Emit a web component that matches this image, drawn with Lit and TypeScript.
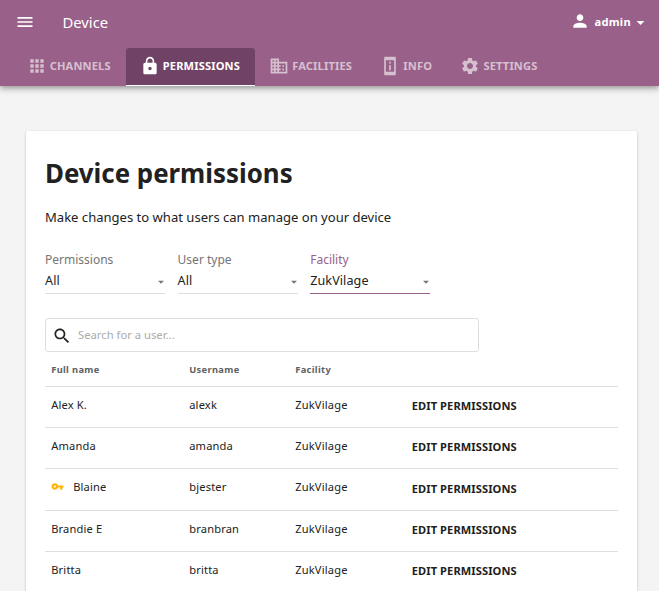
import { LitElement, html, css, nothing } from "lit";
import { customElement, property } from "lit/decorators.js";
import { classMap } from "lit/directives/class-map.js";

const ICONS: Record<string, string> = {
  menu: "M3 18h18v-2H3v2zm0-5h18v-2H3v2zm0-7v2h18V6H3z",
  apps: "M4 8h4V4H4v4zm6 12h4v-4h-4v4zm-6 0h4v-4H4v4zm0-6h4v-4H4v4zm6 0h4v-4h-4v4zm6-10v4h4V4h-4zm-6 4h4V4h-4v4zm6 6h4v-4h-4v4zm0 6h4v-4h-4v4z",
  lock: "M18 8h-1V6c0-2.76-2.24-5-5-5S7 3.24 7 6v2H6c-1.1 0-2 .9-2 2v10c0 1.1.9 2 2 2h12c1.1 0 2-.9 2-2V10c0-1.100-.9-2-2-2zm-6 9c-1.100 0-2-.9-2-2s.9-2 2-2 2 .9 2 2-.9 2-2 2zm3.100-9H8.900V6c0-1.710 1.390-3.100 3.100-3.100 1.710 0 3.100 1.390 3.100 3.100v2z",
  business: "M12 7V3H2v18h20V7H12zM6 19H4v-2h2v2zm0-4H4v-2h2v2zm0-4H4V9h2v2zm0-4H4V5h2v2zm4 12H8v-2h2v2zm0-4H8v-2h2v2zm0-4H8V9h2v2zm0-4H8V5h2v2zm10 12h-8v-2h2v-2h-2v-2h2v-2h-2V9h8v10zm-2-8h-2v2h2v-2zm0 4h-2v2h2v-2z",
  info: "M13 7h-2v2h2V7zm0 4h-2v6h2v-6zM18 1H6c-.6 0-1 .4-1 1v20c0 .6.4 1 1 1h12c.6 0 1-.4 1-1V2c0-.6-.4-1-1-1zM17 19H7V5h10v14z",
  settings: "M19.140 12.940c.04-.3.060-.61.060-.94 0-.32-.02-.64-.07-.94l2.030-1.580c.18-.14.230-.41.120-.61l-1.920-3.320c-.12-.22-.37-.29-.59-.22l-2.390.96c-.5-.38-1.030-.7-1.620-.94l-.36-2.540c-.04-.24-.24-.41-.48-.41h-3.840c-.24 0-.43.170-.47.410l-.36 2.540c-.59.240-1.130.57-1.620.94l-2.390-.96c-.22-.08-.47 0-.59.220L2.740 8.870c-.12.210-.08.470.120.610l2.030 1.580c-.05.300-.09.630-.09.940s.02.640.07.940l-2.030 1.580c-.18.140-.23.410-.12.610l1.920 3.320c.12.220.37.290.59.220l2.390-.96c.5.380 1.030.7 1.620.94l.36 2.540c.05.240.24.410.48.410h3.840c.24 0 .44-.17.47-.41l.36-2.540c.59-.24 1.130-.56 1.620-.94l2.390.96c.22.080.47 0 .59-.22l1.920-3.320c.12-.22.070-.47-.12-.61l-2.010-1.580zM12 15.600c-1.980 0-3.600-1.620-3.600-3.600s1.620-3.600 3.600-3.600 3.600 1.620 3.600 3.600-1.620 3.600-3.600 3.600z",
  person: "M12 12c2.210 0 4-1.790 4-4s-1.790-4-4-4-4 1.790-4 4 1.790 4 4 4zm0 2c-2.670 0-8 1.340-8 4v2h16v-2c0-2.660-5.330-4-8-4z",
  caret: "M7 10l5 5 5-5z",
  search: "M15.500 14h-.79l-.28-.27C15.410 12.590 16 11.110 16 9.500 16 5.910 13.090 3 9.500 3S3 5.910 3 9.500 5.910 16 9.500 16c1.610 0 3.090-.59 4.230-1.570l.27.280v.79l5 4.990L20.490 19l-4.990-5zm-6 0C7.010 14 5 11.990 5 9.500S7.010 5 9.500 5 14 7.010 14 9.500 11.990 14 9.500 14z",
  key: "M12.650 10C11.830 7.670 9.610 6 7 6c-3.310 0-6 2.690-6 6s2.690 6 6 6c2.610 0 4.830-1.670 5.650-4H17v4h4v-4h2v-4H12.650zM7 14c-1.100 0-2-.9-2-2s.9-2 2-2 2 .9 2 2-.9 2-2 2z",
};

@customElement("ui-icon")
class UiIcon extends LitElement {
  @property() name = "";
  static styles = css`
    :host { display: block; flex: none; width: 20px; height: 20px; }
    svg { display: block; width: 100%; height: 100%; fill: currentColor; }
  `;
  render() {
    return html`<svg viewBox="0 0 24 24"><path d=${ICONS[this.name] ?? ""}></path></svg>`;
  }
}

@customElement("app-header")
class AppHeader extends LitElement {
  static styles = css`
    :host {
      display: block; height: 86px; background: #996189; color: #fff; position: relative;
      box-shadow: 0 2px 4px -1px rgba(0, 0, 0, 0.2), 0 4px 5px rgba(0, 0, 0, 0.14), 0 1px 10px rgba(0, 0, 0, 0.12);
    }
    .bar { display: flex; align-items: center; height: 48px; padding: 0 9px 4px 15px; box-sizing: border-box; }
    .title { margin-left: 27.500px; font-size: 14.800px; line-height: 20px; }
    .user { margin-left: auto; display: flex; align-items: center; font-size: 11.100px; font-weight: 700; letter-spacing: 0.300px; }
    .user span { margin-top: -2px; }
    .person { margin: -3px 4.500px 0 0; }
    .caret { width: 19px; height: 19px; }
    .tabs { display: flex; height: 38px; padding-left: 12.700px; }
    .tab {
      display: flex; align-items: center; gap: 3px; height: 38px; padding: 0 14px 3px; box-sizing: border-box;
      font-size: 11.100px; letter-spacing: 0.150px; font-weight: 700; color: #d6c0d0; white-space: nowrap;
    }
    .tab:first-child { padding-right: 15px; }
    .tab + .tab { padding-left: 14.300px; }
    .tab.active { padding-left: 14px; padding-right: 14.900px; }
    .active { color: #fff; background: #704366; box-shadow: inset 0 -1px #fff; border-radius: 3px 3px 0 0; }
  `;
  private tabs = [
    ["apps", "CHANNELS"],
    ["lock", "PERMISSIONS"],
    ["business", "FACILITIES"],
    ["info", "INFO"],
    ["settings", "SETTINGS"],
  ];
  render() {
    return html`
      <div class="bar">
        <ui-icon name="menu"></ui-icon>
        <div class="title">Device</div>
        <div class="user">
          <ui-icon class="person" name="person"></ui-icon><span>admin</span><ui-icon class="caret" name="caret"></ui-icon>
        </div>
      </div>
      <nav class="tabs">
        ${this.tabs.map(([icon, label]) => html`
          <div class=${classMap({ tab: true, active: icon === "lock" })}>
            <ui-icon name=${icon}></ui-icon><span>${label}</span>
          </div>`)}
      </nav>
    `;
  }
}

@customElement("filter-select")
class FilterSelect extends LitElement {
  @property() label = "";
  @property() value = "";
  @property({ type: Boolean, reflect: true }) active = false;
  static styles = css`
    :host { display: block; width: 120px; height: 43px; box-sizing: border-box; border-bottom: 1px solid #dedede; }
    :host([active]) { border-bottom-color: #996189; }
    .label { font-size: 12px; line-height: 18px; color: #757575; }
    :host([active]) .label { color: #996189; }
    .value { display: flex; align-items: center; justify-content: space-between; font-size: 12.600px; letter-spacing: 0.080px; line-height: 18px; margin-top: 3px; }
    .caret { width: 14px; height: 14px; margin: 1px -3px 0 0; color: #757575; }
  `;
  render() {
    return html`
      <div class="label">${this.label}</div>
      <div class="value"><span>${this.value}</span><ui-icon class="caret" name="caret"></ui-icon></div>
    `;
  }
}

@customElement("app-root")
class AppRoot extends LitElement {
  static styles = css`
    :host {
      display: block; height: 591px; overflow: hidden; background: #f4f4f4; color: #212121;
      font-family: "Noto Sans", sans-serif;
    }
    .card {
      margin: 45px 22px 0 26px; height: 520px; box-sizing: border-box; padding: 24px 19px 0; background: #fff; border-radius: 2px;
      box-shadow: 0 1px 3px rgba(0, 0, 0, 0.2), 0 1px 1px rgba(0, 0, 0, 0.14), 0 2px 1px -1px rgba(0, 0, 0, 0.12);
    }
    h1 { margin: -1px 0 0; font-size: 25.850px; line-height: 38px; font-weight: 700; }
    .intro { margin: 16px 0 0; font-size: 13.060px; line-height: 18px; }
    .filters { display: flex; gap: 12.600px; margin-top: 25px; }
    .search {
      display: flex; align-items: center; width: 434px; height: 34px; margin-top: 24px; padding: 0 0 1px 6px;
      box-sizing: border-box; border: 1px solid #dedede; border-radius: 3px;
      font-size: 11.200px; letter-spacing: 0.030px; color: #ababab;
    }
    .search ui-icon { margin: 2px 6px 0 0; color: #212121; }
    .row {
      display: grid; grid-template-columns: 138px 106px 116.500px 1fr; align-items: center;
      height: 41.200px; padding: 0 0 4.200px 6.200px; box-sizing: border-box; border-bottom: 1px solid #dedede;
      font-size: 11.100px; letter-spacing: 0.180px; line-height: 16px;
    }
    .head { height: 35px; padding-bottom: 0; padding-top: 2px; font-size: 9.300px; letter-spacing: 0.340px; font-weight: 700; color: #616161; }
    .name { display: flex; align-items: center; }
    .key { width: 13px; height: 13px; margin: -1px 9px 0 0; color: #ffb300; }
    .edit { font-weight: 700; padding-top: 2.400px; letter-spacing: 0.100px; }
  `;
  private users = [
    { name: "Alex K.", username: "alexk" },
    { name: "Amanda", username: "amanda" },
    { name: "Blaine", username: "bjester", admin: true },
    { name: "Brandie E", username: "branbran" },
    { name: "Britta", username: "britta" },
  ];
  render() {
    return html`
      <app-header></app-header>
      <main class="card">
        <h1>Device permissions</h1>
        <p class="intro">Make changes to what users can manage on your device</p>
        <div class="filters">
          <filter-select label="Permissions" value="All"></filter-select>
          <filter-select label="User type" value="All"></filter-select>
          <filter-select label="Facility" value="ZukVilage" active></filter-select>
        </div>
        <div class="search"><ui-icon name="search"></ui-icon><span>Search for a user...</span></div>
        <div class="row head"><span>Full name</span><span>Username</span><span>Facility</span></div>
        ${this.users.map((u) => html`
          <div class="row">
            <span class="name">${u.admin ? html`<ui-icon class="key" name="key"></ui-icon>` : nothing}${u.name}</span>
            <span>${u.username}</span>
            <span>ZukVilage</span>
            <span class="edit">EDIT PERMISSIONS</span>
          </div>`)}
      </main>
    `;
  }
}
